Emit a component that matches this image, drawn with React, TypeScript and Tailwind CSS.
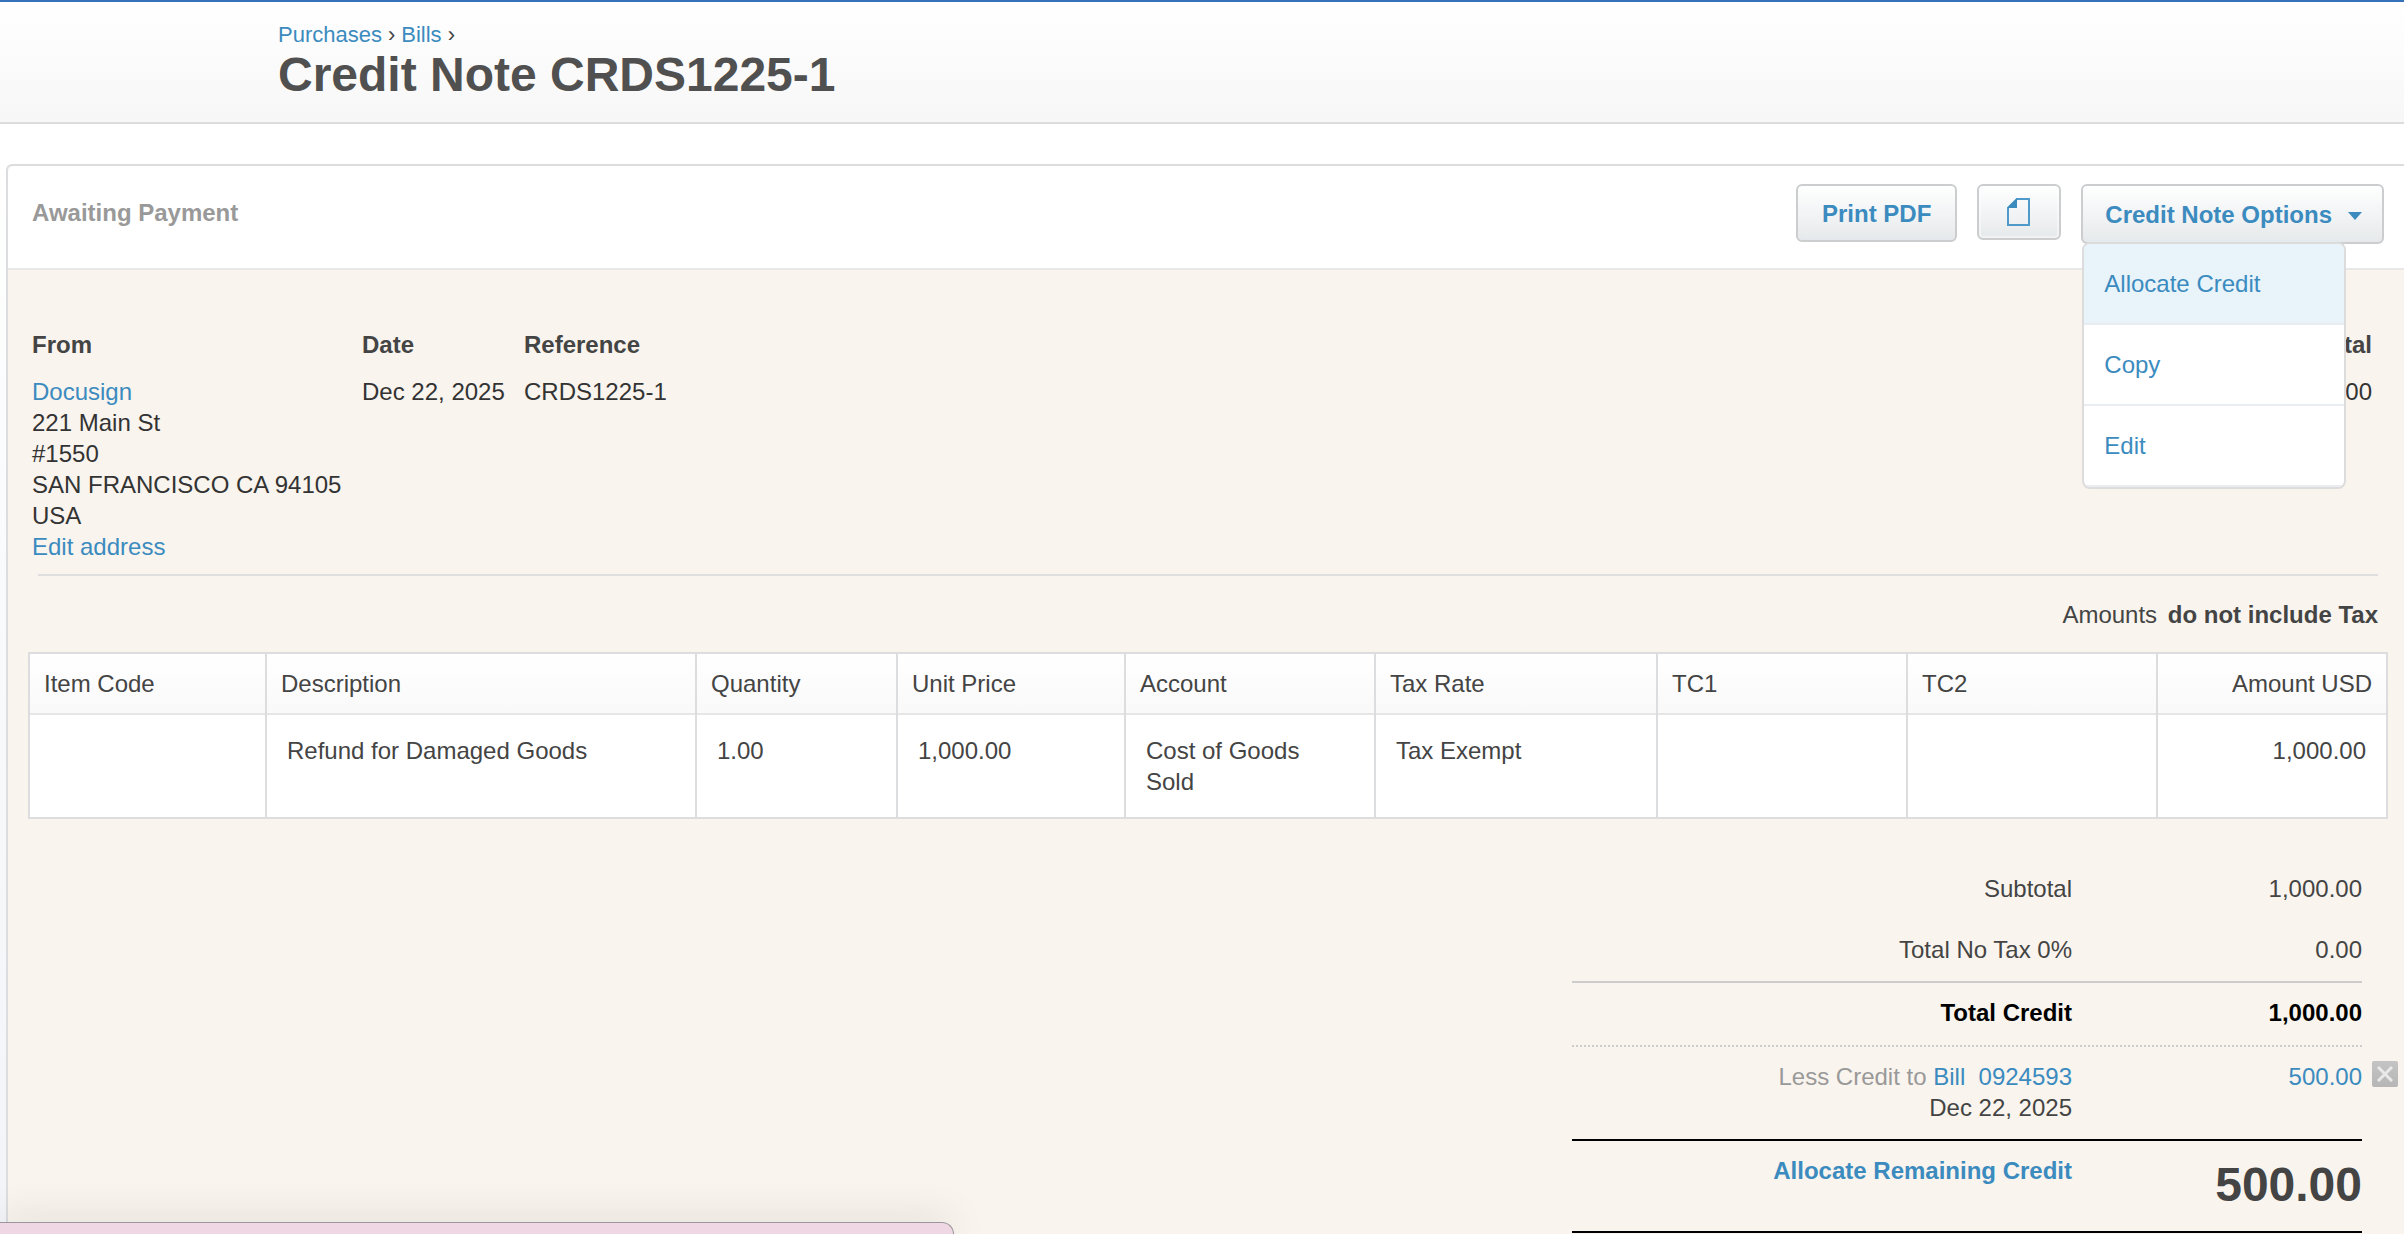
import type { ReactNode } from "react";

const columns = [
  { name: "Item Code", width: "w-[237px]" },
  { name: "Description", width: "w-[430px]" },
  { name: "Quantity", width: "w-[201px]" },
  { name: "Unit Price", width: "w-[228px]" },
  { name: "Account", width: "w-[250px]" },
  { name: "Tax Rate", width: "w-[282px]" },
  { name: "TC1", width: "w-[250px]" },
  { name: "TC2", width: "w-[250px]" },
  { name: "Amount USD", width: "w-[230px]" },
];

const lineItems = [
  ["", "Refund for Damaged Goods", "1.00", "1,000.00", "Cost of Goods Sold", "Tax Exempt", "", "", "1,000.00"],
];

const menuItems = ["Allocate Credit", "Copy", "Edit"];

const buttonLook =
  "rounded-md border-2 border-[#cbcdce] bg-linear-to-b from-white to-[#e6e9eb] font-bold text-[#3b8bbf]";

function Link({ children, className = "" }: { children: ReactNode; className?: string }) {
  return (
    <a href="#" className={`text-[#3b8bbf] ${className}`}>
      {children}
    </a>
  );
}

function Header() {
  return (
    <header className="h-[124px] border-t-2 border-b-2 border-t-[#3572b9] border-b-[#dcdcdc] bg-linear-to-b from-white to-[#f7f7f7] pt-[19px] pl-[278px]">
      <nav aria-label="Breadcrumb" className="flex h-7 items-center gap-1.5 text-[22px] leading-7">
        <Link>Purchases</Link>
        <span>›</span>
        <Link>Bills</Link>
        <span>›</span>
      </nav>
      <h1 className="text-[48px] leading-[52px] font-bold text-[#505050]">Credit Note CRDS1225-1</h1>
    </header>
  );
}

function OptionsMenu() {
  return (
    <div className="relative">
      <button type="button" aria-expanded="true" className={`flex h-[60px] items-center gap-4 px-5 ${buttonLook}`}>
        <span className="pl-0.5">Credit Note Options</span>
        <svg width="14" height="8" viewBox="0 0 14 8" className="mt-1" aria-hidden="true">
          <path d="M0 0H14L7 8Z" fill="#3b8bbf" />
        </svg>
      </button>
      <ul className="absolute top-[58px] left-px z-10 w-[264px] overflow-hidden rounded-lg border-2 border-[#dcdcdc] bg-white">
        {menuItems.map((item, i) => (
          <li key={item} className={`border-b-2 border-[#e9edf2] ${i === 0 ? "bg-[#e8f3fa]" : ""}`}>
            <Link className="flex h-[79px] items-center pl-5">{item}</Link>
          </li>
        ))}
      </ul>
    </div>
  );
}

function Toolbar() {
  return (
    <div className="flex h-[104px] items-start rounded-tl-md border-b-2 border-[#e8e8e8] bg-white pt-[18px] pr-5 pl-6">
      <span className="pt-[13px] font-bold text-[#999999]">Awaiting Payment</span>
      <div className="ml-auto flex items-start gap-5">
        <button type="button" className={`h-[58px] px-6 ${buttonLook}`}>
          Print PDF
        </button>
        <button
          type="button"
          aria-label="Files"
          className={`flex h-14 w-[84px] items-center justify-center inset-ring-2 inset-ring-white/40 ${buttonLook}`}
        >
          <svg width="24" height="28" viewBox="0 0 24 28" aria-hidden="true">
            <path d="M10 1H22V27H1V10Z" fill="none" stroke="#4f9ac8" strokeWidth="2" />
            <path d="M10 0V10H0Z" fill="#3b8bbf" />
          </svg>
        </button>
        <OptionsMenu />
      </div>
    </div>
  );
}

function Details() {
  return (
    <section className="flex px-6 pt-[59px] text-[#333333]">
      <div className="w-[330px]">
        <h2 className="mb-4 font-bold text-[#444444]">From</h2>
        <Link>Docusign</Link>
        <address className="not-italic">
          221 Main St
          <br />
          #1550
          <br />
          SAN FRANCISCO CA 94105
          <br />
          USA
        </address>
        <Link>Edit address</Link>
      </div>
      <div className="w-[162px]">
        <h2 className="mb-4 font-bold text-[#444444]">Date</h2>
        <p>Dec 22, 2025</p>
      </div>
      <div>
        <h2 className="mb-4 font-bold text-[#444444]">Reference</h2>
        <p>CRDS1225-1</p>
      </div>
      <div className="mr-2 ml-auto text-right">
        <h2 className="mb-4 font-bold text-[#444444]">Total</h2>
        <p>1,000.00</p>
      </div>
    </section>
  );
}

function LineItems() {
  return (
    <table className="w-full table-fixed border-collapse border-2 border-[#dcdddf] bg-white">
      <thead className="bg-linear-to-b from-white to-[#f9f9f9]">
        <tr className="h-[61px] border-b-2 border-[#e6e6e6]">
          {columns.map((c, i) => (
            <th
              key={c.name}
              scope="col"
              className={`border-x-2 border-x-[#dcdddf] px-3.5 font-normal ${c.width} ${i === 8 ? "text-right" : "text-left"}`}
            >
              {c.name}
            </th>
          ))}
        </tr>
      </thead>
      <tbody>
        {lineItems.map((row, r) => (
          <tr key={r} className="h-[104px] align-top">
            {row.map((value, i) => (
              <td
                key={i}
                className={`border-x-2 border-x-[#dcdddf] px-5 pt-5 ${i === 8 ? "text-right" : "text-left"}`}
              >
                {value}
              </td>
            ))}
          </tr>
        ))}
      </tbody>
    </table>
  );
}

function Totals() {
  return (
    <section className="mt-10 mr-[42px] ml-auto w-[790px]">
      <div className="flex h-[61px] pt-[14px] text-right">
        <span className="w-[500px]">Subtotal</span>
        <span className="flex-1">1,000.00</span>
      </div>
      <div className="flex h-[61px] pt-[14px] text-right">
        <span className="w-[500px]">Total No Tax 0%</span>
        <span className="flex-1">0.00</span>
      </div>
      <div className="flex h-16 border-t-2 border-[#cccccc] pt-[14px] text-right font-bold text-black">
        <span className="w-[500px]">Total Credit</span>
        <span className="flex-1">1,000.00</span>
      </div>
      <div className="relative flex h-[94px] border-t-2 border-dotted border-[#cccccc] pt-[14px] text-right">
        <div className="w-[500px]">
          <span className="text-[#999999]">Less Credit to </span>
          <Link>Bill&nbsp; 0924593</Link>
          <p>Dec 22, 2025</p>
        </div>
        <Link className="flex-1">500.00</Link>
        <button
          type="button"
          aria-label="Remove allocation"
          className="absolute top-[14px] left-full ml-2.5 flex size-[26px] items-center justify-center rounded-xs bg-linear-to-b from-[#c4c4c4] to-[#b6b6b6]"
        >
          <svg width="16" height="16" viewBox="0 0 16 16" aria-hidden="true">
            <path d="M1 1L15 15M15 1L1 15" stroke="#e9e9e9" strokeWidth="3" />
          </svg>
        </button>
      </div>
      <div className="flex h-[94px] border-y-2 border-black pt-[14px] text-right">
        <Link className="w-[500px] font-bold">Allocate Remaining Credit</Link>
        <strong className="flex-1 pt-1 text-[48px] leading-[52px] text-[#444444]">500.00</strong>
      </div>
    </section>
  );
}

export default function App() {
  return (
    <div className="relative h-screen overflow-hidden bg-white font-['Liberation_Sans',Arial,sans-serif] text-2xl leading-[31px] text-[#444444]">
      <Header />
      <div className="bg-linear-to-b from-white to-[#f3f4f8] pt-10 pl-1.5">
        <main className="min-h-[1070px] rounded-tl-md border-t-2 border-l-2 border-[#dcdddf] bg-[#f9f4ee]">
          <Toolbar />
          <Details />
          <hr className="mt-3 mr-[26px] ml-[30px] border-t-2 border-[#dfdfdf]" />
          <p className="mt-[23px] mr-[26px] mb-[22px] text-right">
            Amounts&nbsp;<strong className="ml-1">do not include Tax</strong>
          </p>
          <div className="mr-4 ml-5">
            <LineItems />
          </div>
          <Totals />
        </main>
      </div>
      <aside
        aria-label="Notice"
        className="absolute bottom-0 left-0 h-3 w-[954px] rounded-tr-xl border-t border-r border-[#9c969a] bg-[#efd7e4] shadow-[0_0_40px_rgba(0,0,0,0.2)]"
      />
    </div>
  );
}
